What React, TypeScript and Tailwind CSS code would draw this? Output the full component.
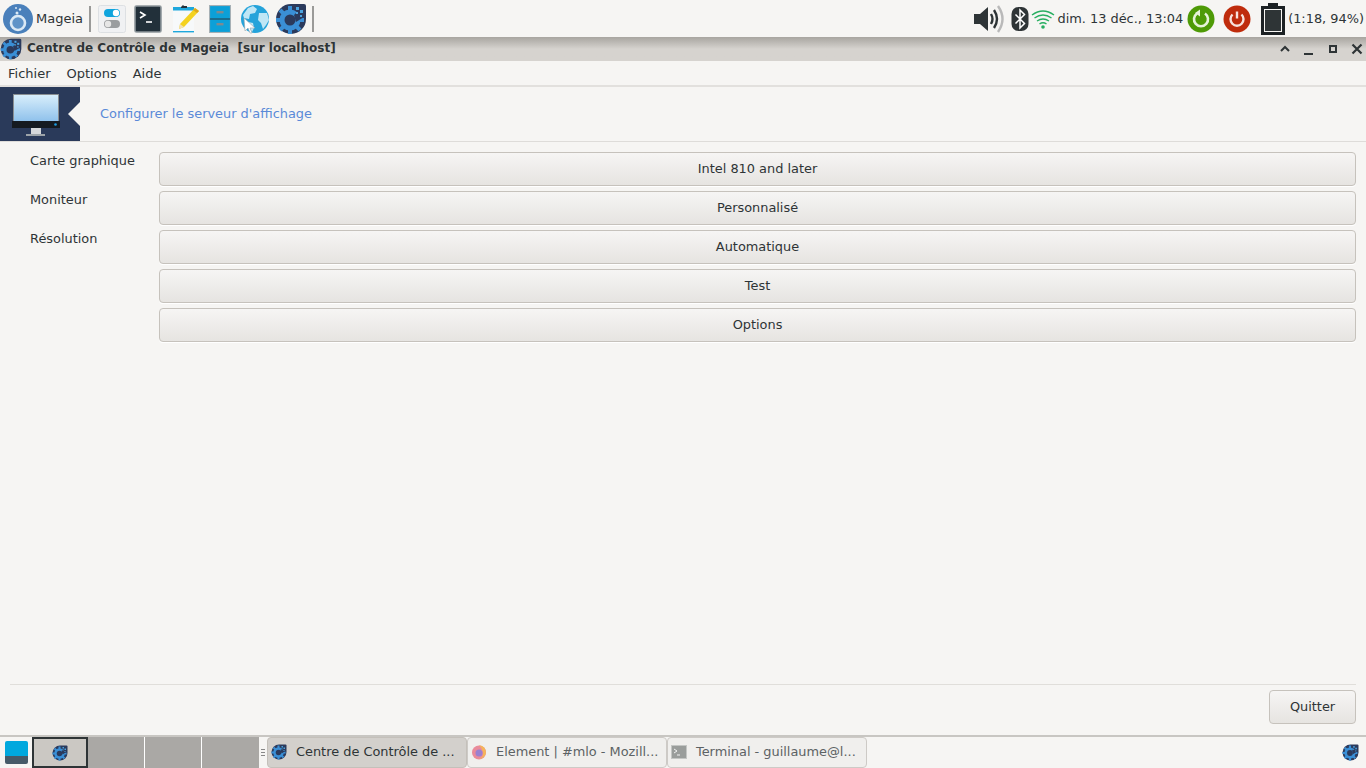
const font = { fontFamily: '"DejaVu Sans", sans-serif' };

function Gear({ size = 32, className = "" }: { size?: number; className?: string }) {
  return (
    <svg width={size} height={size} viewBox="0 0 32 32" className={className}>
      <path d="M16 1h13q2 0 2 2v13a15 15 0 1 1-15-15z" fill="#2b3a5c" />
      <circle cx="15" cy="17" r="10.5" fill="#3a8fd6" />
      <g stroke="#3a8fd6" strokeWidth="4">
        <path d="M15 3v5M15 26v5M1 17h5M24 17h5M5 7l4 4M25 27l-4-4M5 27l4-4" />
      </g>
      <circle cx="15" cy="17" r="5.5" fill="#2b3a5c" />
      <path d="M19 12l7-7h3v9l-8 5z" fill="#2b3a5c" />
      <g fill="#4aa3e0">
        <rect x="21" y="4" width="3" height="3" />
        <rect x="25" y="7" width="3" height="3" />
        <rect x="21" y="9" width="2" height="2" />
        <rect x="25" y="12" width="2" height="2" />
      </g>
    </svg>
  );
}

function MageiaLogo() {
  return (
    <svg width="30" height="30" viewBox="0 0 30 30">
      <circle cx="15" cy="15" r="15" fill="#4a80bb" />
      <circle cx="15" cy="19" r="7" fill="#5f93c8" stroke="#dbe9f5" strokeWidth="2.6" />
      <circle cx="14" cy="9" r="1.5" fill="#dbe9f5" />
      <circle cx="17" cy="5.5" r="1.2" fill="#dbe9f5" />
      <circle cx="13" cy="4" r="1" fill="#dbe9f5" />
    </svg>
  );
}

function Switches() {
  return (
    <svg width="28" height="28" viewBox="0 0 28 28">
      <rect x="0.5" y="0.5" width="27" height="27" rx="2" fill="#f0f1f3" stroke="#dde0e3" />
      <rect x="6" y="4" width="16" height="8" rx="4" fill="#0fa4dd" />
      <circle cx="18" cy="8" r="3.2" fill="#fff" />
      <rect x="6" y="15" width="16" height="8" rx="4" fill="#9a9d9f" />
      <circle cx="10" cy="19" r="3.2" fill="#e6e6e6" />
    </svg>
  );
}

function TerminalIcon() {
  return (
    <svg width="28" height="28" viewBox="0 0 28 28">
      <rect x="1" y="1" width="26" height="26" rx="1.5" fill="#22303a" stroke="#8e979c" strokeWidth="1.6" />
      <path d="M6 7l5 3-5 3" fill="none" stroke="#fff" strokeWidth="1.6" />
      <path d="M12 17h6" stroke="#fff" strokeWidth="1.6" />
    </svg>
  );
}

function NotesIcon() {
  return (
    <svg width="28" height="28" viewBox="0 0 28 28">
      <rect x="1" y="2" width="21" height="25" fill="#f7f9fa" />
      <rect x="1" y="2" width="21" height="3.5" fill="#1ea7dc" />
      <rect x="1" y="26" width="21" height="1.4" fill="#1ea7dc" />
      <path d="M9 2l2-2 1 1h3v2h-6z" fill="#22303a" />
      <path d="M23 3l4 3-15 16-5 2 1-5z" fill="#f4d21f" />
      <path d="M23 3l4 3-2 2-4-3z" fill="#e0a91a" />
      <path d="M8 19l4 3-5 2z" fill="#f3e2b3" />
    </svg>
  );
}

function CabinetIcon() {
  return (
    <svg width="22" height="28" viewBox="0 0 22 28">
      <rect x="0.5" y="0.5" width="21" height="27" fill="#0ca0d8" stroke="#a6b0b5" strokeWidth="1.2" />
      <rect x="1" y="13.5" width="20" height="1" fill="#2b3a45" />
      <rect x="7.5" y="6" width="7" height="2.4" fill="#7d8a91" />
      <rect x="7.5" y="18" width="7" height="2.4" fill="#7d8a91" />
    </svg>
  );
}

function GlobeIcon() {
  return (
    <svg width="30" height="30" viewBox="0 0 30 30">
      <circle cx="15" cy="15" r="14" fill="#25a3da" />
      <path d="M13 2l4 3-2 4-5 1-1 5-5-1-1-3 5-7zM19 9l8 0 2 7-3 5-3 4-2-6-3-3zM8 18l5 1 1 5-2 4-3-5z" fill="#bfe6f5" />
      <path d="M4 14l11 10-5 0 2 5-2 0-2-5-3 3z" fill="#fff" stroke="#9aa5ab" strokeWidth="0.6" />
    </svg>
  );
}

function Speaker() {
  return (
    <svg width="32" height="30" viewBox="0 0 32 30">
      <path d="M1 10h6l8-7v24l-8-7H1z" fill="#2e3436" />
      <path d="M18 10q3 5 0 10" fill="none" stroke="#2e3436" strokeWidth="2.4" />
      <path d="M21 6q6 9 0 18" fill="none" stroke="#2e3436" strokeWidth="2.4" />
      <path d="M25 2q9 13 0 26" fill="none" stroke="#b9b9b9" strokeWidth="2.4" />
    </svg>
  );
}

function Bluetooth() {
  return (
    <svg width="18" height="24" viewBox="0 0 18 24">
      <rect x="0.5" y="0" width="17" height="24" rx="7" fill="#2e3436" />
      <path d="M4.5 7.5l9 9-4.5 4.5v-18l4.5 4.5-9 9" fill="none" stroke="#fff" strokeWidth="1.5" />
    </svg>
  );
}

function Wifi() {
  return (
    <svg width="24" height="24" viewBox="0 0 24 24">
      <g fill="none" stroke="#27ae60" strokeWidth="1.4">
        <path d="M1 8q11-8 22 0" />
        <path d="M3.5 11q8.500-6 17 0" />
        <path d="M6 14q6-4 12 0" />
        <path d="M8.500 17q3.500-2.500 7 0" />
      </g>
      <circle cx="12" cy="20" r="1.8" fill="#27ae60" />
    </svg>
  );
}

function Refresh() {
  return (
    <svg width="28" height="28" viewBox="0 0 28 28">
      <circle cx="14" cy="14" r="13.500" fill="#4e9a06" />
      <path d="M10 8.500a7 7 0 1 0 8 0" fill="none" stroke="#e6f2d8" strokeWidth="2.600" />
      <path d="M13 4.500v7l-5-3.500z" fill="#e6f2d8" />
    </svg>
  );
}

function Power() {
  return (
    <svg width="28" height="28" viewBox="0 0 28 28">
      <circle cx="14" cy="14" r="13.500" fill="#bf2c0c" />
      <path d="M9.500 9.500a6.500 6.500 0 1 0 9 0" fill="none" stroke="#f7e3dc" strokeWidth="2.400" />
      <path d="M14 6.500v7" stroke="#f7e3dc" strokeWidth="2.400" />
    </svg>
  );
}

function Battery() {
  return (
    <svg width="24" height="32" viewBox="0 0 24 32">
      <path d="M7 0h10v3h7v29H0V3h7z" fill="#1c2124" />
      <rect x="3" y="6" width="18" height="23" fill="#f6f5f3" />
      <rect x="4" y="7" width="16" height="21" fill="#2e3436" />
    </svg>
  );
}

function Monitor() {
  return (
    <svg width="48" height="44" viewBox="0 0 48 44">
      <defs>
        <linearGradient id="screen" x1="0" y1="0" x2="0" y2="1">
          <stop offset="0" stopColor="#d8eefb" />
          <stop offset="1" stopColor="#90c2ec" />
        </linearGradient>
      </defs>
      <rect x="1" y="0" width="46" height="27" fill="#8a8f92" />
      <rect x="2" y="1" width="44" height="26" fill="url(#screen)" />
      <rect x="0" y="27" width="48" height="7" fill="#151a20" />
      <circle cx="43.500" cy="30.500" r="1.300" fill="#1c9ce0" />
      <rect x="19" y="34" width="10" height="6" fill="#d5d8da" />
      <rect x="14" y="40" width="19" height="2" fill="#9ca3a8" />
    </svg>
  );
}

function LaunchSep() {
  return <div className="w-[2px] h-[26px] bg-[#9a9a98]" />;
}

function WmButtons() {
  return (
    <div className="flex items-center gap-[10px] pr-[2px]">
      <svg width="14" height="14" viewBox="0 0 14 14">
        <path d="M3 9l4-4 4 4" fill="none" stroke="#2e3436" strokeWidth="2" />
      </svg>
      <svg width="14" height="14" viewBox="0 0 14 14">
        <path d="M2 12h9" fill="none" stroke="#2e3436" strokeWidth="2" />
      </svg>
      <svg width="14" height="14" viewBox="0 0 14 14">
        <rect x="4" y="4" width="6" height="6" fill="none" stroke="#2e3436" strokeWidth="2" />
      </svg>
      <svg width="14" height="14" viewBox="0 0 14 14">
        <path d="M2.500 2.500l9 9M11.500 2.500l-9 9" fill="none" stroke="#2e3436" strokeWidth="2.200" />
      </svg>
    </div>
  );
}

function FormButton({ label }: { label: string }) {
  return (
    <button className="h-[34px] w-full rounded-[4px] border border-[#c6c2bc] bg-gradient-to-b from-[#f6f5f4] to-[#e6e4e1] pb-[1px] text-[12.900px] text-[#2e3436] shadow-[0_1px_0_#ffffff]">
      {label}
    </button>
  );
}

function TaskButton({ label, active, icon }: { label: string; active?: boolean; icon: React.ReactNode }) {
  return (
    <div
      className={
        active
          ? "flex h-[31px] w-[200px] items-center rounded-[4px] border border-[#c4c0ba] bg-[#d3d0cc] pb-[1px] pl-[3px] text-[12.900px] text-[#2e3436]"
          : "flex h-[31px] w-[200px] items-center rounded-[4px] border border-[#cdcac6] bg-[#f0efed] pb-[1px] pl-[3px] text-[12.900px] text-[#5c6264]"
      }
    >
      <div className="flex w-[16px] justify-center">{icon}</div>
      <span className="ml-[9px] whitespace-nowrap">{label}</span>
    </div>
  );
}

function TopPanel() {
  return (
    <div className="flex h-[37px] items-center justify-between bg-[#f6f5f3] pl-[3px] pr-[2px] text-[12.900px] text-[#2e3436]">
      <div className="flex items-center">
        <MageiaLogo />
        <span className="ml-[3px] text-[13px]">Mageia</span>
        <div className="ml-[6px]"><LaunchSep /></div>
        <div className="ml-[7px] flex items-center gap-[8px]">
          <Switches />
          <TerminalIcon />
          <div className="ml-[2px]"><NotesIcon /></div>
          <div className="pl-[1px] pr-[1px]"><CabinetIcon /></div>
          <GlobeIcon />
        </div>
        <div className="ml-[5px]"><Gear size={32} /></div>
        <div className="ml-[5px]"><LaunchSep /></div>
      </div>
      <div className="flex items-center">
        <Speaker />
        <div className="ml-[6px]"><Bluetooth /></div>
        <div className="ml-[2px]"><Wifi /></div>
        <span className="ml-[2px] whitespace-nowrap">dim. 13 déc., 13:04</span>
        <div className="ml-[4px]"><Refresh /></div>
        <div className="ml-[8px]"><Power /></div>
        <div className="ml-[10px]"><Battery /></div>
        <span className="ml-[3px] whitespace-nowrap">(1:18, 94%)</span>
      </div>
    </div>
  );
}

function TitleBar() {
  return (
    <div className="flex h-[24px] items-center justify-between bg-gradient-to-b from-[#a8a5a0] via-[#d6d3cf] to-[#d6d3cf] to-40%">
      <div className="flex items-center">
        <Gear size={22} />
        <span className="ml-[5px] whitespace-nowrap pb-[2px] text-[12px] font-bold text-[#2e3436]">
          Centre de Contrôle de Mageia&nbsp;&nbsp;[sur localhost]
        </span>
      </div>
      <WmButtons />
    </div>
  );
}

function TaskBar() {
  return (
    <div className="flex h-[33px] items-stretch border-t-2 border-[#c8c6c2] bg-[#f6f5f3]">
      <div className="flex w-[32px] items-center justify-center">
        <div className="h-[23px] w-[23px] overflow-hidden rounded-[2px]">
          <div className="h-[15px] bg-[#00a8de]" />
          <div className="h-[8px] bg-[#465a68]" />
        </div>
      </div>
      <div className="flex w-[56px] items-center justify-center border-2 border-[#2e3436] bg-[#cbc8c3]">
        <Gear size={16} />
      </div>
      <div className="w-[57px] border-r border-white bg-[#aaa8a5]" />
      <div className="w-[57px] border-r border-white bg-[#aaa8a5]" />
      <div className="w-[57px] bg-[#aaa8a5]" />
      <div className="flex w-[8px] flex-col items-center justify-center gap-[2px]">
        <div className="h-[1px] w-[4px] bg-[#888]" />
        <div className="h-[1px] w-[4px] bg-[#888]" />
        <div className="h-[1px] w-[4px] bg-[#888]" />
      </div>
      <div className="flex items-center">
        <TaskButton label="Centre de Contrôle de ..." active icon={<Gear size={16} />} />
        <TaskButton
          label="Element | #mlo - Mozill..."
          icon={
            <svg width="16" height="16" viewBox="0 0 16 16">
              <circle cx="8" cy="8.500" r="7" fill="#e98a9a" />
              <path d="M8 1q7 1 7 8a7 7 0 0 1-7 6q5-2 4-7-1-4-4-7z" fill="#f4b45a" />
              <circle cx="8" cy="9" r="3.500" fill="#9a80d0" />
            </svg>
          }
        />
        <TaskButton
          label="Terminal - guillaume@l..."
          icon={
            <svg width="16" height="16" viewBox="0 0 16 16">
              <rect x="0.500" y="1.500" width="15" height="13" fill="#9a9d9b" stroke="#c4c6c4" />
              <path d="M3 5l3 2-3 2M6 11h3" fill="none" stroke="#f2f2f2" strokeWidth="1" />
            </svg>
          }
        />
      </div>
      <div className="flex flex-1 items-center justify-end pr-[7px]">
        <Gear size={17} />
      </div>
    </div>
  );
}

export default function App() {
  return (
    <div className="flex h-[768px] w-[1366px] flex-col overflow-hidden bg-[#f6f5f3]" style={font}>
      <TopPanel />
      <TitleBar />
      <div className="flex h-[26px] items-center gap-[16px] border-b-2 border-[#e2e0dd] pl-[8px] pt-[1px] text-[13px] text-[#2e3436]">
        <span>Fichier</span>
        <span>Options</span>
        <span>Aide</span>
      </div>
      <div className="flex h-[55px] items-center border-b border-[#dedcd9]">
        <div className="relative flex h-[54px] w-[80px] items-start bg-[#2a3a5a] pl-[12px] pt-[7px]">
          <Monitor />
          <div className="absolute right-0 top-[15px] h-0 w-0 border-y-[12px] border-r-[12px] border-y-transparent border-r-[#f6f5f3]" />
        </div>
        <span className="ml-[20px] pb-[1px] text-[12.900px] text-[#5a8ad8]">Configurer le serveur d'affichage</span>
      </div>
      <div className="flex flex-1 gap-[25px] pl-[30px] pr-[10px] pt-[10px]">
        <div className="flex w-[104px] flex-col gap-[20px] text-[12.900px] text-[#2e3436]">
          <div className="h-[19px] whitespace-nowrap leading-[17px]">Carte graphique</div>
          <div className="h-[19px] leading-[17px]">Moniteur</div>
          <div className="h-[19px] leading-[17px]">Résolution</div>
        </div>
        <div className="flex flex-1 flex-col gap-[5px]">
          <FormButton label="Intel 810 and later" />
          <FormButton label="Personnalisé" />
          <FormButton label="Automatique" />
          <FormButton label="Test" />
          <FormButton label="Options" />
        </div>
      </div>
      <div className="mx-[10px] border-t border-[#e0deda]" />
      <div className="flex h-[50px] items-start justify-end pr-[10px] pt-[5px]">
        <button className="h-[34px] w-[87px] rounded-[4px] border border-[#c6c2bc] bg-gradient-to-b from-[#f6f5f4] to-[#e6e4e1] pb-[1px] text-[12.900px] text-[#2e3436]">
          Quitter
        </button>
      </div>
      <TaskBar />
    </div>
  );
}
